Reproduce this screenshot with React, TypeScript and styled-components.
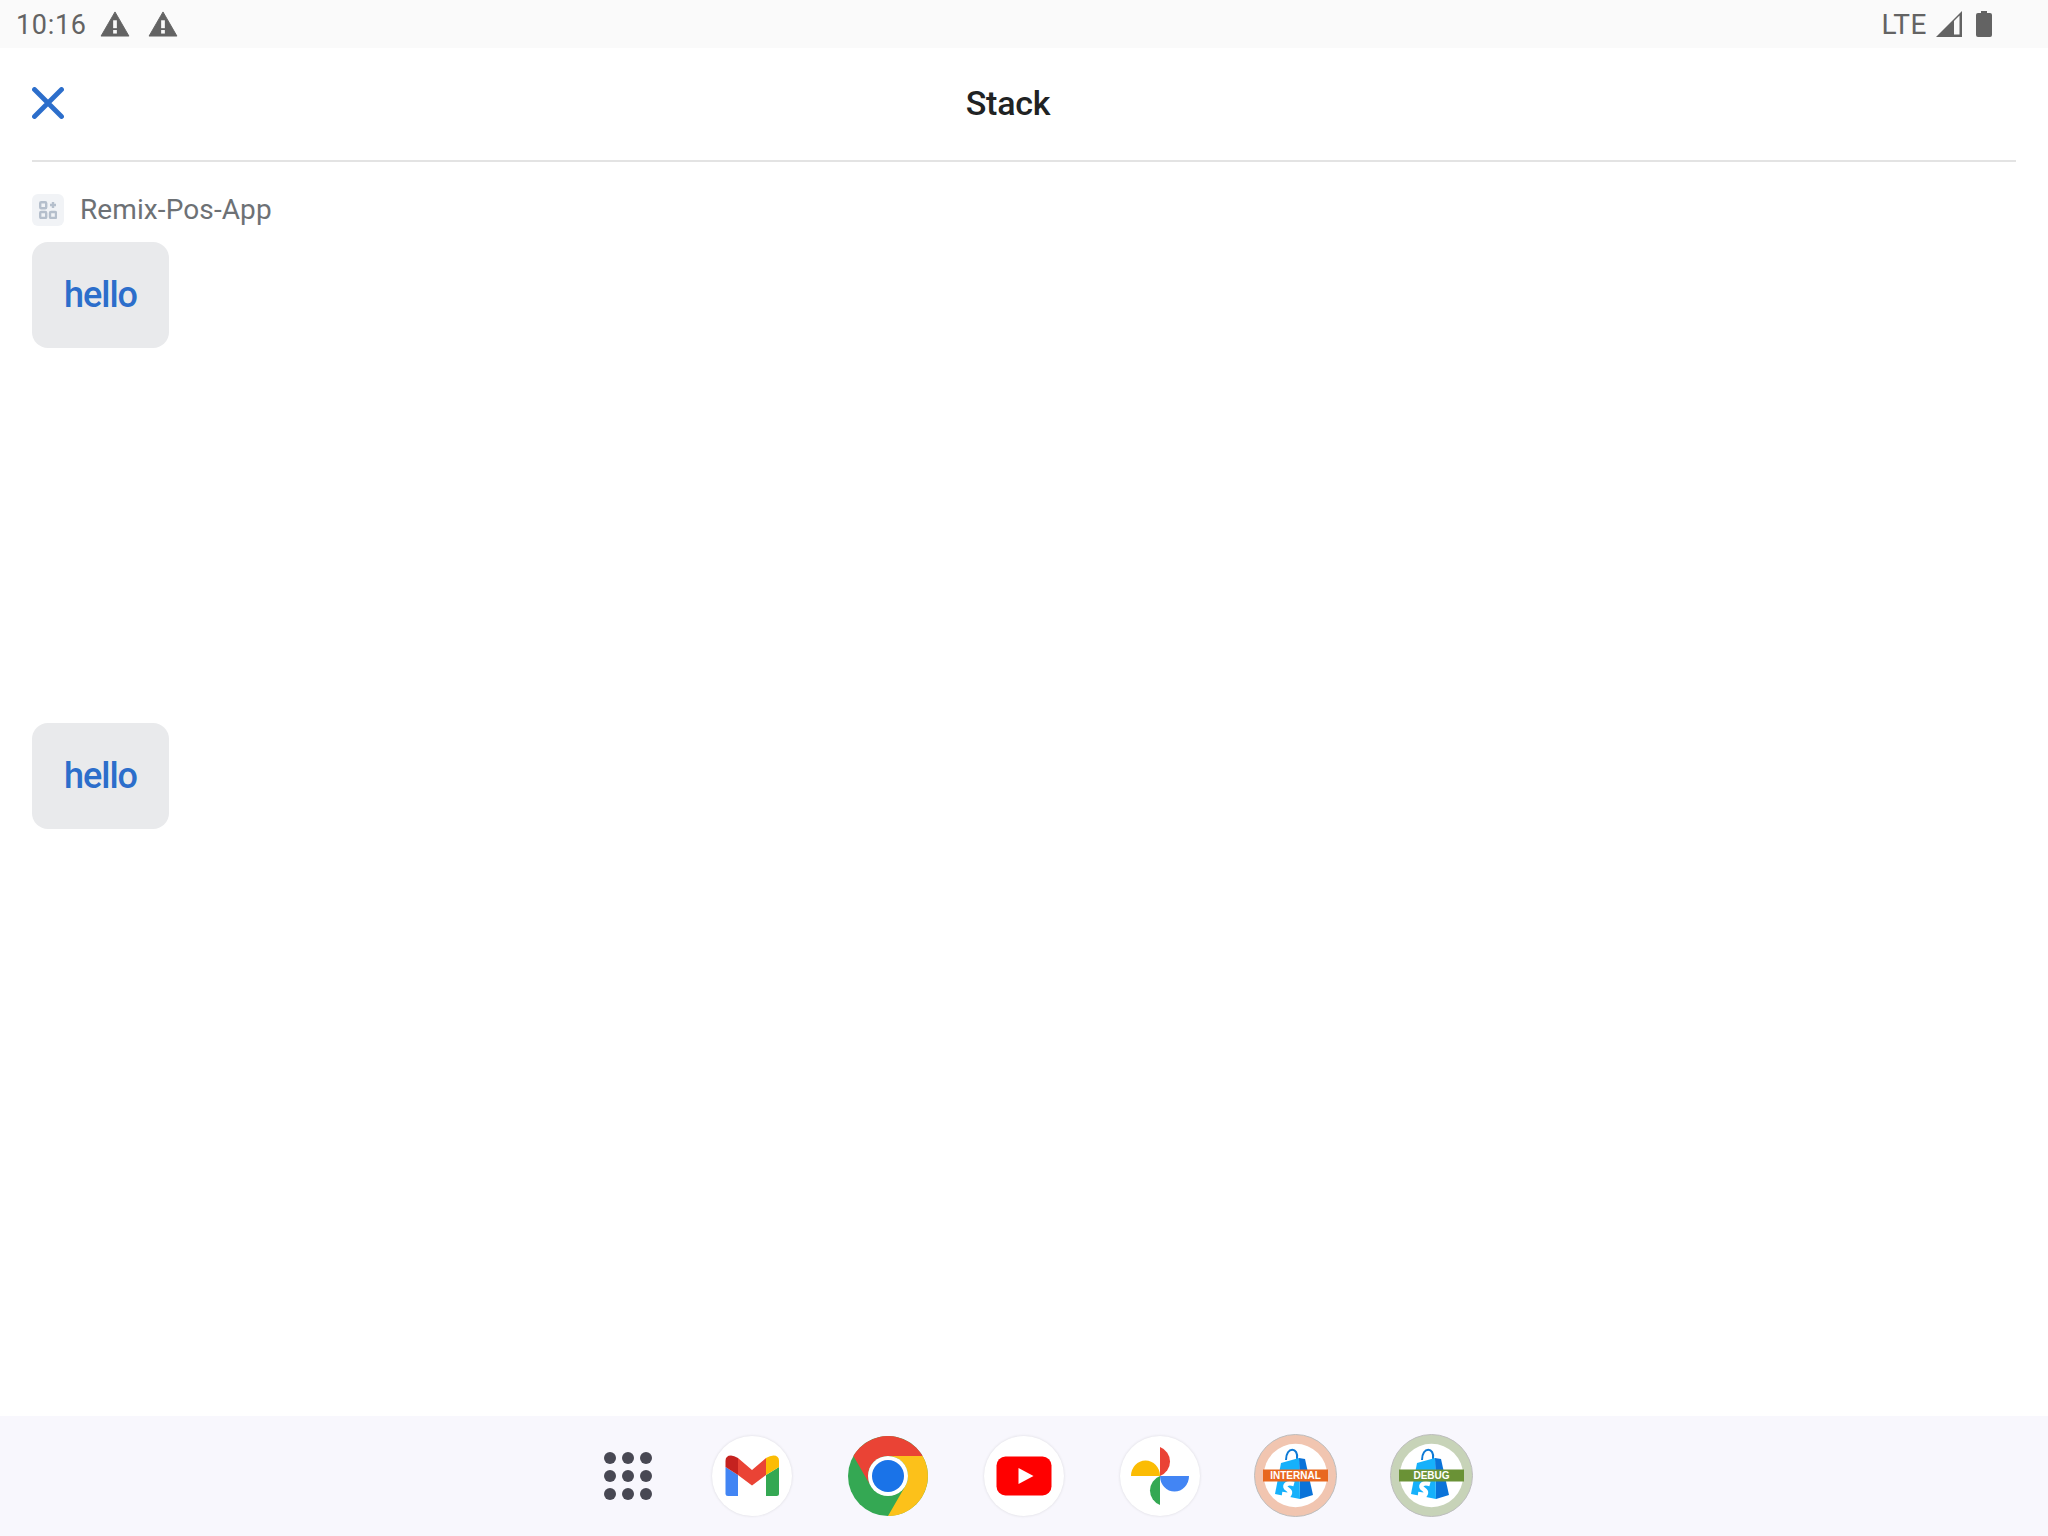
import React from "react";
import styled, { createGlobalStyle } from "styled-components";

const Global = createGlobalStyle`
  html, body { margin: 0; padding: 0; background: #fff; }
  body { font-family: Roboto, "Liberation Sans", sans-serif; }
`;
const Screen = styled.div`
  width: 2048px; height: 1536px; display: flex; flex-direction: column; overflow: hidden; background: #fff;
`;
const StatusBar = styled.div`
  height: 48px; flex: none; background: #fafafa; display: flex; align-items: center; justify-content: space-between;
  padding: 0 56px 0 16px; color: #636363; box-sizing: border-box;
`;
const StatusGroup = styled.div`
  display: flex; align-items: center; gap: ${(p: { $gap: number }) => p.$gap}px;
`;
const Time = styled.span`
  font-size: 27px; letter-spacing: 0.7px; margin-right: -5px; padding-top: 2px;
`;
const Lte = styled.span`
  font-size: 28px; letter-spacing: 0.5px; padding-top: 1px;
`;
const BatterySlot = styled.span`
  display: flex; margin-left: 5px;
`;
const Main = styled.main`
  flex: 1; display: flex; flex-direction: column; padding: 0 32px; min-height: 0;
`;
const Header = styled.header`
  height: 114px; flex: none; box-sizing: border-box; border-bottom: 2px solid #e3e3e3; display: flex; align-items: center; position: relative;
`;
const CloseButton = styled.div`
  width: 32px; height: 32px; display: flex; margin-bottom: 2px;
`;
const Title = styled.h1`
  position: absolute; left: 0; right: 32px; top: 34px; margin: 0; text-align: center; font-size: 34px; font-weight: 500; line-height: 42px; color: #202223; letter-spacing: -0.2px;
`;
const AppRow = styled.div`
  display: flex; align-items: center; gap: 16px; margin-top: 32px; height: 32px;
`;
const AppBadge = styled.div`
  width: 32px; height: 32px; border-radius: 6px; background: #f1f3f6; display: flex; align-items: center; justify-content: center;
`;
const AppName = styled.span`
  font-size: 28px; color: #6d7175; letter-spacing: 0.1px; padding-bottom: 2px;
`;
const HelloButton = styled.button`
  width: 137px; height: 106px; border: 0; border-radius: 16px; background: #e9eaec; color: #2c6ecb; font-family: inherit; font-size: 36px; font-weight: 500; padding: 0; letter-spacing: -1px;
  flex: none; margin-top: ${(p: { $top: number }) => p.$top}px;
`;
const Dock = styled.nav`
  height: 120px; flex: none; background: #f8f7fd; display: flex; align-items: center; padding-left: 588px; box-sizing: border-box;
`;
const DrawerDots = styled.div`
  width: 80px; height: 80px; display: flex; align-items: center; justify-content: center; margin-right: 44px;
`;
const IconDisc = styled.div`
  width: 80px; height: 80px; border-radius: 50%; flex: none; background: #fff; box-shadow: 0 0 3px rgba(0,0,0,.12); margin-right: 56px; display: flex; align-items: center; justify-content: center; overflow: hidden;
`;
const ChromeSlot = styled.div`
  width: 80px; height: 80px; flex: none; margin-right: 56px; display: flex;
`;
const BadgeDisc = styled.div`
  width: 83px; height: 83px; flex: none; margin-right: 53px; margin-left: ${(p: { $left: number }) => p.$left}px; margin-bottom: 2px; display: flex;
`;

const Warning = () => (
  <svg width="30" height="26" viewBox="0 0 32 28">
    <path d="M16 1 L31 27 H1 Z" fill="#636363" stroke="#636363" strokeLinejoin="round" />
    <rect x="14" y="10" width="4" height="8.500" fill="#fafafa" />
    <rect x="14" y="20.500" width="4" height="3.800" fill="#fafafa" />
  </svg>
);
const Signal = () => (
  <svg width="26" height="26" viewBox="0 0 26 26">
    <path d="M0 26 L26 0 V26 Z" fill="#636363" />
    <path d="M18 10 L23.500 4.500 V23.500 H18 Z" fill="#fafafa" />
  </svg>
);
const Battery = () => (
  <svg width="16" height="26" viewBox="0 0 16 26">
    <path d="M5 0 H11 V2 H14 Q16 2 16 4 V24 Q16 26 14 26 H2 Q0 26 0 24 V4 Q0 2 2 2 H5 Z" fill="#636363" />
  </svg>
);
const Close = () => (
  <svg width="32" height="32" viewBox="0 0 32 32">
    <path d="M2.500 2.500 L29.500 29.500 M29.500 2.500 L2.500 29.500" stroke="#2c6ecb" strokeWidth="4.800" strokeLinecap="round" />
  </svg>
);
const AppsGlyph = () => (
  <svg width="18" height="18" viewBox="0 0 18 18" fill="none" stroke="#b5bfcc" strokeWidth="2.400">
    <rect x="1.200" y="1.200" width="6" height="6" rx="1" />
    <rect x="1.200" y="11" width="6" height="6" rx="1" />
    <rect x="11" y="11" width="6" height="6" rx="1" />
    <path d="M14 1 V7 M11 4 H17" />
  </svg>
);
const Dots = () => (
  <svg width="48" height="48" viewBox="0 0 48 48" fill="#484853">
    {[6, 24, 42].flatMap((y) => [6, 24, 42].map((x) => <circle key={`${x}-${y}`} cx={x} cy={y} r="6" />))}
  </svg>
);
const Gmail = () => (
  <svg width="80" height="80" viewBox="0 0 80 80">
    <path d="M13.500 31 L26 39 V60 H16 Q13.500 60 13.500 57.500 Z" fill="#4285f4" />
    <path d="M54 39 L67 31 V57.500 Q67 60 64.500 60 H54 Z" fill="#34a853" />
    <path d="M13.500 25 Q13.500 19.500 19 19.500 Q22 19.500 26 22 V39 L13.500 31 Z" fill="#c5221f" />
    <path d="M54 22 Q58 19.500 61.500 19.500 Q67 19.500 67 25 V31 L54 39 Z" fill="#fbbc04" />
    <path d="M26 22 L40 34 L54 22 V39 L40 49.500 L26 39 Z" fill="#ea4335" />
  </svg>
);
const Chrome = () => (
  <svg width="80" height="80" viewBox="0 0 80 80">
    <circle cx="40" cy="40" r="40" fill="#34a853" />
    <path d="M5.400 20 A40 40 0 0 1 74.600 20 H40 A20 20 0 0 0 22.700 50 Z" fill="#ea4335" />
    <path d="M74.600 20 A40 40 0 0 1 40 80 L57.300 50 A20 20 0 0 0 40 20 Z" fill="#fcc11a" />
    <circle cx="40" cy="40" r="20" fill="#fff" />
    <circle cx="40" cy="40" r="16" fill="#1a73e8" />
  </svg>
);
const YouTube = () => (
  <svg width="80" height="80" viewBox="0 0 80 80">
    <rect x="12.500" y="20.500" width="55" height="39" rx="9" fill="#ff0000" />
    <path d="M34.500 32 L49.500 40 L34.500 48 Z" fill="#fff" />
  </svg>
);
const Photos = () => (
  <svg width="80" height="80" viewBox="0 0 80 80">
    <path d="M40 11 A15.500 15.500 0 0 1 40 40 Z" fill="#ea4335" />
    <path d="M11 40 A14.500 15.500 0 0 1 40 40 Z" fill="#fbbc04" />
    <path d="M40 69 A15.500 15.500 0 0 1 40 40 Z" fill="#34a853" />
    <path d="M69 40 A14.500 15.500 0 0 1 40 40 Z" fill="#4285f4" />
  </svg>
);
const Shop = ({ label, ring, band }: { label: string; ring: string; band: string }) => (
  <svg width="83" height="83" viewBox="0 0 83 83">
    <circle cx="41.500" cy="41.500" r="41" fill={ring} stroke="#bdbdbd" strokeWidth="1" />
    <circle cx="41.500" cy="41.500" r="31.700" fill="#fff" />
    <path d="M32 26 C32 12 45 13 43 25" fill="none" stroke="#0d7ad6" strokeWidth="2" />
    <path d="M45 24 L51 25 L59 61 L46 65 Z" fill="#0a73d9" />
    <path d="M27 29 L45 24 L46 65 L21 60 Z" fill="#16b1fb" />
    <path d="M40 50 C33 48 30 51 32 54 C36 57 37 58 35 61 L28 60" fill="none" stroke="#fff" strokeWidth="4.500" />
    <rect x="9" y="35.500" width="65" height="12" fill={band} />
    <text x="41.500" y="45" textAnchor="middle" fontFamily="Liberation Sans, sans-serif" fontWeight="700" fontSize="10" fill="#fff">{label}</text>
  </svg>
);

export default function App() {
  return (
    <Screen>
      <Global />
      <StatusBar>
        <StatusGroup $gap={18}>
          <Time>10:16</Time>
          <Warning />
          <Warning />
        </StatusGroup>
        <StatusGroup $gap={9}>
          <Lte>LTE</Lte>
          <Signal />
          <BatterySlot><Battery /></BatterySlot>
        </StatusGroup>
      </StatusBar>
      <Main>
        <Header>
          <CloseButton><Close /></CloseButton>
          <Title>Stack</Title>
        </Header>
        <AppRow>
          <AppBadge><AppsGlyph /></AppBadge>
          <AppName>Remix-Pos-App</AppName>
        </AppRow>
        <HelloButton $top={16}>hello</HelloButton>
        <HelloButton $top={375}>hello</HelloButton>
      </Main>
      <Dock>
        <DrawerDots><Dots /></DrawerDots>
        <IconDisc><Gmail /></IconDisc>
        <ChromeSlot><Chrome /></ChromeSlot>
        <IconDisc><YouTube /></IconDisc>
        <IconDisc><Photos /></IconDisc>
        <BadgeDisc $left={-2}><Shop label="INTERNAL" ring="#f1c5b0" band="#e8681f" /></BadgeDisc>
        <BadgeDisc $left={0}><Shop label="DEBUG" ring="#c7d3b8" band="#6a9236" /></BadgeDisc>
      </Dock>
    </Screen>
  );
}
